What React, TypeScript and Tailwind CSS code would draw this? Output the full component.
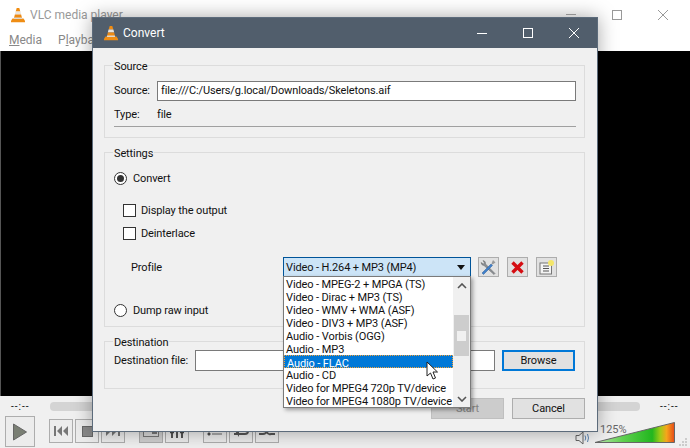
import React from "react";

function Cone({ className }: { className: string }) {
  return (
    <svg viewBox="0 0 16 16" className={className}>
      <path d="M2.5 11.5h11l1.5 2.2v1.5H1v-1.5z" fill="#ef8d14" />
      <path d="M6.7 1h2.6l1 3.6H5.7z" fill="#f08c10" />
      <path d="M5.6 4.6h4.8l.8 3H4.8z" fill="#e8e4de" />
      <path d="M4.9 7.6h6.2l.9 3.4H4z" fill="#ee8a12" />
      <path d="M4.2 10.6h7.6l.4 1.4H3.8z" fill="#ddd8d0" />
    </svg>
  );
}

function CtlBtn({ children, active }: { children?: React.ReactNode; active?: boolean }) {
  return (
    <div className={`flex h-[24px] w-[24px] items-center justify-center border border-[#adadad] ${active ? "bg-[#cfcfcf]" : "bg-[#ececec]"}`}>
      {children}
    </div>
  );
}

function Legend({ children }: { children: React.ReactNode }) {
  return <legend className="-ml-[1px] translate-y-[2px] px-[1px] text-[11px] leading-[16px] text-[#111]">{children}</legend>;
}

function Radio({ checked }: { checked?: boolean }) {
  return (
    <span className="flex h-[13px] w-[13px] shrink-0 items-center justify-center rounded-full border border-[#333] bg-white">
      {checked && <span className="h-[7px] w-[7px] rounded-full bg-[#333]" />}
    </span>
  );
}

const items = [
  "Video - MPEG-2 + MPGA (TS)",
  "Video - Dirac + MP3 (TS)",
  "Video - WMV + WMA (ASF)",
  "Video - DIV3 + MP3 (ASF)",
  "Audio - Vorbis (OGG)",
  "Audio - MP3",
  "Audio - FLAC",
  "Audio - CD",
  "Video for MPEG4 720p TV/device",
  "Video for MPEG4 1080p TV/device",
];

export default function App() {
  return (
    <div className="relative h-[448px] w-[690px] overflow-hidden bg-white text-[11px] text-[#111]" style={{ fontFamily: 'Roboto, "Noto Sans", sans-serif' }}>
      {/* Main VLC window */}
      <div className="flex h-full flex-col">
        <div className="flex h-[29px] shrink-0 items-center pl-[10px]">
          <Cone className="h-[16px] w-[16px]" />
          <span className="ml-[4px] text-[12px] text-[#999]">VLC media player</span>
          <div className="ml-auto flex items-center">
            <svg width="46" height="16" viewBox="0 0 46 16"><path d="M14 7.5h10" stroke="#aaa" /></svg>
            <svg width="46" height="16" viewBox="0 0 46 16"><rect x="14.5" y="3.5" width="9" height="9" fill="none" stroke="#999" /></svg>
            <svg width="46" height="16" viewBox="0 0 46 16"><path d="M14 3l10 10M24 3L14 13" stroke="#999" /></svg>
          </div>
        </div>
        <div className="flex h-[22px] shrink-0 items-center gap-[16px] pl-[9px] text-[12px] text-[#888]">
          <span><span className="underline">M</span>edia</span>
          <span>P<span className="underline">l</span>ayback</span>
        </div>
        <div className="flex-1 border-l border-[#555] bg-black" />
        <div className="h-[52px] shrink-0 bg-[#f0f0f0] pl-[5px] pr-[2px]">
          <div className="flex h-[20px] items-center">
            <span className="w-[40px] pl-[6px] text-[10px] tracking-[1px] text-[#111]">--:--</span>
            <div className="ml-[5px] h-[9px] w-[590px] rounded-[4px] bg-[#d4d4d4]" />
            <span className="ml-[20px] text-[10px] tracking-[1px] text-[#111]">--:--</span>
          </div>
          <div className="flex items-start">
            <div className="flex h-[31px] w-[30px] items-center justify-center border border-[#adadad] bg-[#ececec]">
              <svg width="16" height="20" viewBox="0 0 16 20"><path d="M1.5 2 L14.5 10 L1.5 18 Z" fill="#7a7f74" stroke="#666" /></svg>
            </div>
            <div className="ml-[14px] mt-[3px] flex gap-[2px]">
              <CtlBtn><svg width="16" height="10" viewBox="0 0 16 10"><path d="M1 0h2v10H1zM9 0v10L4 5zM15 0v10L10 5z" fill="#777" /></svg></CtlBtn>
              <CtlBtn><span className="h-[11px] w-[11px] border border-[#666] bg-[#888]" /></CtlBtn>
              <CtlBtn><svg width="16" height="10" viewBox="0 0 16 10"><path d="M13 0h2v10h-2zM7 0v10l5-5zM1 0v10l5-5z" fill="#777" /></svg></CtlBtn>
            </div>
            <div className="ml-[14px] mt-[3px] flex gap-[2px]">
              <CtlBtn active><svg width="16" height="12" viewBox="0 0 16 12"><rect x="0.5" y="0.5" width="15" height="11" fill="#d8d8d8" stroke="#777" /><rect x="9" y="2" width="5" height="7" fill="#777" /></svg></CtlBtn>
              <CtlBtn><svg width="16" height="14" viewBox="0 0 16 14"><path d="M3 0v14M8 0v14M13 0v14" stroke="#555" strokeWidth="2" /><path d="M1 8h4M6 5h4M11 8h4" stroke="#444" strokeWidth="2.5" /></svg></CtlBtn>
            </div>
            <div className="ml-[14px] mt-[3px] flex gap-[2px]">
              <CtlBtn><svg width="16" height="12" viewBox="0 0 16 12"><path d="M1 2h2v2H1zM1 8h2v2H1zM5 3h10M5 6h10M5 9h10" stroke="#666" /></svg></CtlBtn>
              <CtlBtn><svg width="18" height="14" viewBox="0 0 18 14"><path d="M2 10h11q3 0 3-3" fill="none" stroke="#555" strokeWidth="2" /><path d="M1 4l6 3v6z" fill="#555" /></svg></CtlBtn>
              <CtlBtn><svg width="18" height="14" viewBox="0 0 18 14"><path d="M1 5h4q3 0 4 3t4 2h4M1 10h4q3 0 4-3t4-2h4" fill="none" stroke="#555" strokeWidth="2" /></svg></CtlBtn>
            </div>
            <div className="ml-auto flex h-[31px] items-end">
              <svg width="16" height="14" viewBox="0 0 16 14" className="mb-[2px]">
                <path d="M1 4.5h3l4-3.5v12l-4-3.5H1z" fill="none" stroke="#666" />
                <path d="M10 4.5q1.5 2.5 0 5M12.5 3q2 4 0 8" fill="none" stroke="#5b84b1" />
              </svg>
              <div className="relative mb-[3px] ml-[3px] h-[26px] w-[82px]">
                <span className="absolute left-[6px] top-[4px] text-[11px] text-[#666]">125%</span>
                <svg width="82" height="26" viewBox="0 0 82 26" className="absolute left-0 top-0">
                  <defs>
                    <linearGradient id="vol" x1="0" x2="1" y1="0" y2="0">
                      <stop offset="0" stopColor="#bfe8b4" />
                      <stop offset="0.35" stopColor="#5fd04f" />
                      <stop offset="0.72" stopColor="#22b61f" />
                      <stop offset="0.82" stopColor="#9fcb16" />
                      <stop offset="0.9" stopColor="#f6a51b" />
                      <stop offset="1" stopColor="#e64a19" />
                    </linearGradient>
                  </defs>
                  <path d="M1 24.5 L80.5 4.5 V24.5 Z" fill="url(#vol)" stroke="#666" strokeLinejoin="round" />
                </svg>
              </div>
              <svg width="9" height="9" viewBox="0 0 9 9" className="ml-[3px]">
                <path d="M6 0h2v2H6zM3 3h2v2H3zM6 3h2v2H6zM0 6h2v2H0zM3 6h2v2H3zM6 6h2v2H6z" fill="#ccc" />
              </svg>
            </div>
          </div>
        </div>
      </div>

      {/* Convert dialog */}
      <div className="absolute left-[92px] top-[17px] flex h-[415px] w-[506px] flex-col border border-[#5c6b7b] bg-[#f0f0f0] shadow-[0_0_18px_rgba(0,0,0,0.35)]">
        <div className="flex h-[30px] shrink-0 items-center bg-[#515e6c] pl-[10px] text-white">
          <Cone className="h-[16px] w-[16px]" />
          <span className="ml-[4px] text-[12px]">Convert</span>
          <div className="ml-auto flex">
            <svg width="46" height="16" viewBox="0 0 46 16"><path d="M18 8.5h10" stroke="#fff" /></svg>
            <svg width="46" height="16" viewBox="0 0 46 16"><rect x="18.5" y="3.5" width="9" height="9" fill="none" stroke="#fff" /></svg>
            <svg width="46" height="16" viewBox="0 0 46 16"><path d="M18 3l10 10M28 3L18 13" stroke="#fff" /></svg>
          </div>
        </div>
        <div className="flex flex-1 flex-col pl-[11px] pr-[12px] pt-[9px] tracking-[-0.12px]">
          {/* Source */}
          <fieldset className="h-[81px] border border-[#dcdcdc] pl-[9px] pr-[8px]">
            <Legend>Source</Legend>
            <div className="mt-[8px] flex h-[19px] items-center">
              <span className="w-[43px] pt-[2px]">Source:</span>
              <div className="flex h-[20px] flex-1 items-center border border-[#7a7a7a] bg-white pl-[3px] pt-[2px]">file:///C:/Users/g.local/Downloads/Skeletons.aif</div>
            </div>
            <div className="mt-[5px] flex h-[18px] items-center pt-[2px]">
              <span className="w-[43px]">Type:</span>
              <span>file</span>
            </div>
            <div className="mt-[3px] h-px bg-[#a0a0a0]" />
          </fieldset>
          {/* Settings */}
          <fieldset className="mt-[6px] h-[183px] border border-[#dcdcdc] pl-[9px] pr-[8px]">
            <Legend>Settings</Legend>
            <div className="mt-[10px] flex h-[16px] items-center gap-[6px]">
              <Radio checked />
              <span className="pt-[2px]">Convert</span>
            </div>
            <div className="ml-[9px] mt-[16px] flex h-[16px] items-center gap-[5px]">
              <span className="h-[13px] w-[13px] border border-[#333] bg-white" />
              <span className="pt-[2px]">Display the output</span>
            </div>
            <div className="ml-[9px] mt-[7px] flex h-[16px] items-center gap-[5px]">
              <span className="h-[13px] w-[13px] border border-[#333] bg-white" />
              <span className="pt-[2px]">Deinterlace</span>
            </div>
            <div className="mt-[16px] flex h-[20px] items-center">
              <span className="ml-[17px] w-[152px] pt-[2px]">Profile</span>
              <div className="relative h-[20px] w-[188px]">
                <div className="flex h-[20px] items-center justify-between border border-[#005499] bg-[#cce4f7] pl-[2px] pr-[5px]">
                  <span className="pt-[2px]">Video - H.264 + MP3 (MP4)</span>
                  <svg width="8" height="5" viewBox="0 0 8 5"><path d="M0 0h8L4 5z" fill="#111" /></svg>
                </div>
                <div className="absolute left-0 top-[19px] z-10 flex h-[132px] w-[188px] border border-[#7a7a7a] bg-white shadow-[2px_2px_4px_rgba(0,0,0,0.35)]">
                  <div className="min-w-0 flex-1">
                    {items.map((t) => (
                      <div key={t} className={`h-[13px] whitespace-nowrap pl-[2px] leading-[15px] ${t === "Audio - FLAC" ? "border border-dotted border-[#f2a23a] bg-[#0078d7] pl-[1px] leading-[13px] text-white" : ""}`}>
                        {t}
                      </div>
                    ))}
                  </div>
                  <div className="flex w-[17px] shrink-0 flex-col items-center bg-[#f0f0f0]">
                    <svg width="10" height="6" viewBox="0 0 10 6" className="mt-[6px]"><path d="M1 5l4-4 4 4" fill="none" stroke="#555" strokeWidth="1.6" /></svg>
                    <div className="mt-[26px] flex h-[41px] w-[15px] items-center justify-center bg-[#cdcdcd]">
                      <span className="h-[10px] w-[9px] bg-[#f0f0f0]" />
                    </div>
                    <svg width="10" height="6" viewBox="0 0 10 6" className="mb-[5px] mt-auto"><path d="M1 1l4 4 4-4" fill="none" stroke="#555" strokeWidth="1.6" /></svg>
                  </div>
                </div>
                {/* Mouse pointer */}
                <svg width="13" height="20" viewBox="0 0 13 20" className="absolute left-[143px] top-[104px] z-20">
                  <path d="M1 1 L1 15 L4.5 12 L7 18 L9.5 17 L7 11 L11.5 11 Z" fill="#fff" stroke="#222" />
                </svg>
              </div>
              <div className="ml-[7px] flex gap-[8px]">
                <div className="flex h-[20px] w-[21px] items-center justify-center border border-[#adadad] bg-[#e1e1e1]">
                  <svg width="17" height="17" viewBox="0 0 17 17">
                    <path d="M3 1.5 Q6 2 5.5 5 L15 14.5 L14 15.5 L4 6.5 Q1.5 6.5 1 3.5 L3.5 5 L4.5 4 Z" fill="#8a8f94" stroke="#666" strokeWidth="0.5" />
                    <path d="M13 1l2.5 2.5-3 2-1-1z" fill="#999" />
                    <path d="M11 5L2 14l1.5 1.5L12.5 6.5z" fill="#3f7fc9" stroke="#2f5f99" strokeWidth="0.5" />
                  </svg>
                </div>
                <div className="flex h-[20px] w-[21px] items-center justify-center border border-[#adadad] bg-[#e1e1e1]">
                  <svg width="15" height="15" viewBox="0 0 15 15"><path d="M2.5 2.5l10 10M12.5 2.5l-10 10" stroke="#d50d12" strokeWidth="3.4" /></svg>
                </div>
                <div className="flex h-[20px] w-[21px] items-center justify-center border border-[#adadad] bg-[#e1e1e1]">
                  <svg width="17" height="17" viewBox="0 0 17 17">
                    <rect x="2" y="4" width="11.5" height="11" fill="#f4f4f4" stroke="#777" />
                    <path d="M5 7h6M5 9.5h6M5 12h6" stroke="#555" />
                    <circle cx="13" cy="4" r="3" fill="#f4e66a" />
                  </svg>
                </div>
              </div>
            </div>
            <div className="mt-[25px] flex h-[16px] items-center gap-[6px]">
              <Radio />
              <span className="pt-[2px]">Dump raw input</span>
            </div>
          </fieldset>
          {/* Destination */}
          <fieldset className="mt-[6px] h-[56px] border border-[#dcdcdc] pl-[9px] pr-[9px]">
            <Legend>Destination</Legend>
            <div className="mt-[1px] flex items-center">
              <span className="w-[81px] whitespace-nowrap pt-[2px]">Destination file:</span>
              <div className="h-[21px] w-[300px] border border-[#7a7a7a] bg-white" />
              <div className="ml-[7px] flex h-[21px] w-[73px] items-center justify-center border-2 border-[#0078d7] bg-[#e1e1e1] pt-[2px]">Browse</div>
            </div>
          </fieldset>
          <div className="mt-[9px] flex justify-end gap-[8px]">
            <div className="flex h-[21px] w-[73px] items-center justify-center border border-[#bfbfbf] bg-[#cccccc] pt-[2px] text-[#838383]">Start</div>
            <div className="flex h-[21px] w-[73px] items-center justify-center border border-[#adadad] bg-[#e1e1e1] pt-[2px]">Cancel</div>
          </div>
        </div>
      </div>
    </div>
  );
}
